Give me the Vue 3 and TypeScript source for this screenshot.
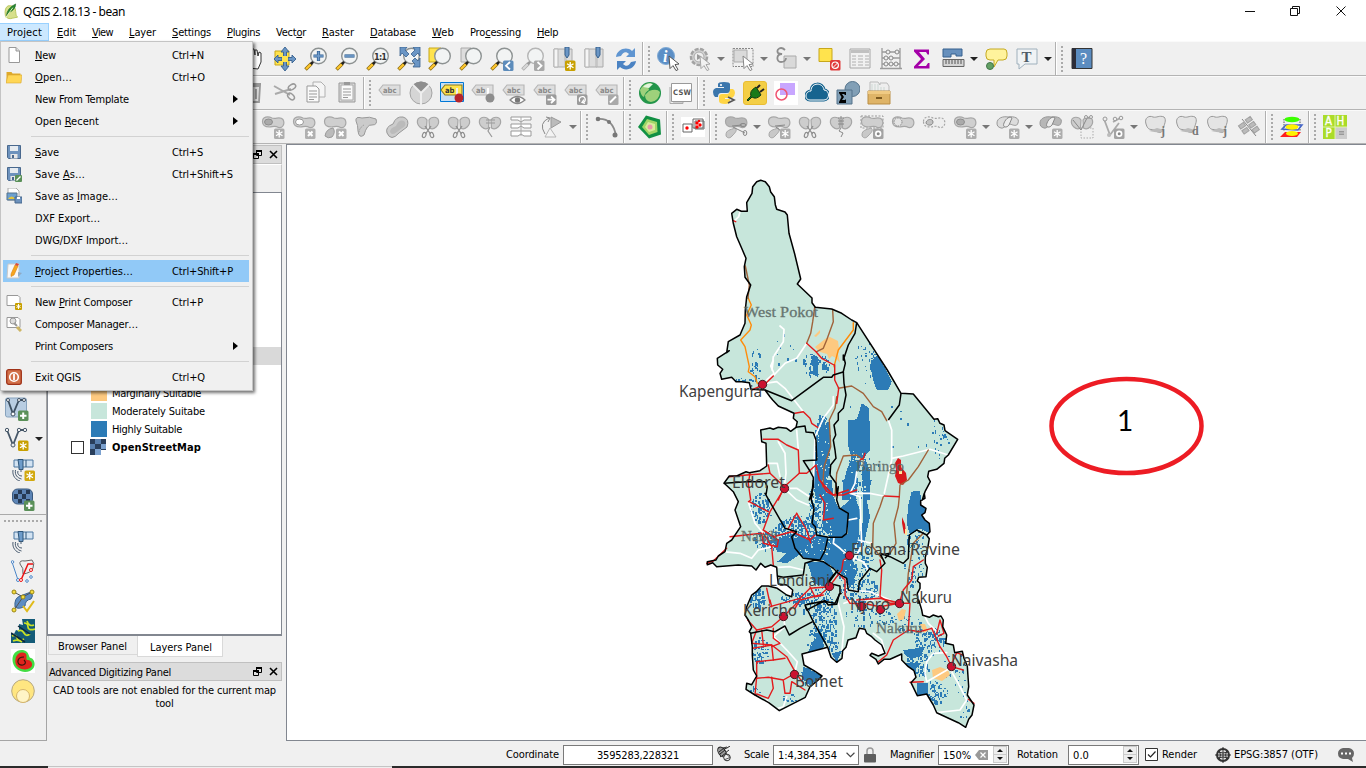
<script setup lang="ts">
import type { Directive } from 'vue'

/* Spreads or tightens letters so a label takes the given width in pixels. */
const vFit: Directive<HTMLElement, number | undefined> = {
  mounted(el, { value }) {
    if (!value) return
    const natural = el.getBoundingClientRect().width
    const count = (el.textContent ?? '').trim().length
    el.style.letterSpacing = `${(value - natural) / count}px`
  },
}

interface Label { text: string; key?: number; w: number }
const menus: Label[] = [
  { text: 'Project', key: 3, w: 35 }, { text: 'Edit', key: 0, w: 19 }, { text: 'View', key: 0, w: 21 },
  { text: 'Layer', key: 0, w: 27 }, { text: 'Settings', key: 0, w: 39 }, { text: 'Plugins', key: 0, w: 33 },
  { text: 'Vector', key: 4, w: 30 }, { text: 'Raster', key: 0, w: 32 }, { text: 'Database', key: 0, w: 46 },
  { text: 'Web', key: 0, w: 22 }, { text: 'Processing', key: 3, w: 51 }, { text: 'Help', key: 0, w: 21 },
]
interface Item { text?: string; key?: number; w?: number; short?: string; sw?: number; icon?: string; sub?: boolean; active?: boolean }
const items: Item[] = [
  { text: 'New', key: 0, w: 21, short: 'Ctrl+N', sw: 32, icon: 'page' },
  { text: 'Open…', key: 0, w: 37, short: 'Ctrl+O', sw: 33, icon: 'folder' },
  { text: 'New From Template', w: 94, sub: true },
  { text: 'Open Recent', key: 5, w: 64, sub: true },
  {},
  { text: 'Save', key: 0, w: 24, short: 'Ctrl+S', sw: 31, icon: 'save' },
  { text: 'Save As…', key: 5, w: 50, short: 'Ctrl+Shift+S', sw: 61, icon: 'saveas' },
  { text: 'Save as Image…', key: 8, w: 83, icon: 'saveimg' },
  { text: 'DXF Export…', w: 65 },
  { text: 'DWG/DXF Import…', w: 93 },
  {},
  { text: 'Project Properties…', key: 0, w: 98, short: 'Ctrl+Shift+P', sw: 61, icon: 'props', active: true },
  {},
  { text: 'New Print Composer', key: 4, w: 97, short: 'Ctrl+P', sw: 31, icon: 'composer' },
  { text: 'Composer Manager…', w: 103, icon: 'manager' },
  { text: 'Print Composers', w: 78, sub: true },
  {},
  { text: 'Exit QGIS', w: 46, short: 'Ctrl+Q', sw: 33, icon: 'exit' },
]

/* "|" starts a new tool group, "v" is a drop-down arrow, "V" its enabled form. */
const rows: string[][] = [
  'hand pansel zoomin zoomout zoom1 full zoomsel zoomlayer zoomlast zoomnext bookadd book refresh | identify action v select v expr v deselect table abacus sigma ruler V tip text V | help'.split(' '),
  'trash cut copy paste | tag pie tagpin tagdim tageye tagmove tagrot tagedit | globe csw | python plug shapes cloud sumshape drawer'.split(' '),
  'ring fillring part reshape offset split splitpart merge join rotate v | curve | penta | cluster | cutblob v cutnew split stitch dashbox holes dashhole ringnew v overlap v overlap2 nodes vnodes v topo topod topoj grid | stack | ahp'.split(' '),
]
const side = ['vecadd', 'vecnew', 'sat', 'rasteradd', '|', 'gps', 'vtools', 'topocheck', 'dem', 'heat', 'circle']

const G = '#a6a6a6'
const badge = (fill: string, glyph: string, x = 13, y = 13.5) =>
  `<g transform="translate(${x} ${y})"><rect width="10.5" height="10.5" rx="1.5" fill="${fill}"/>${glyph}</g>`
const star = '<path d="M5.200 1.500v7.500M2 3.300l6.500 3.900M8.500 3.300L2 7.200" stroke="#fff" stroke-width="1.300"/>'
const gStar = badge('#adadad', star)
const yStar = badge('#c8a000', star)
const plus = badge('#5a9058', '<path d="M5.200 2v6.500M2 5.200h6.500" stroke="#fff" stroke-width="2"/>')
const cross = badge('#b0b0b0', '<path d="M3 3l4.500 4.500M7.500 3L3 7.500" stroke="#fff" stroke-width="2"/>')
const lens = (inner: string, dim = false) =>
  `<circle cx="14.5" cy="9" r="7.8" fill="#f2f4f4" stroke="${dim ? '#b5b5b5' : '#8d9292'}" stroke-width="1.4"/><path d="M1.500 22.500l6-6" stroke="${dim ? '#aaa' : '#8a6a10'}" stroke-width="3.6"/><path d="M2 22l4.800-4.800" stroke="${dim ? '#d8d8d8' : '#ffc72e'}" stroke-width="2.200"/><path d="M6.800 17.200l2.300-2.300" stroke="${dim ? '#999' : '#222'}" stroke-width="2.600"/>${inner}`
const blob = `<path d="M1.500 6.500C1.500 1.500 7 1 11 3c4 1.500 8-2 11 1.500 2.500 5-1 9-4.500 8-4-2.500-6-.5-9-.5C4 12 1.500 10.500 1.500 6.500z" fill="#cfcfcf" stroke="${G}" stroke-width="1.2"/>`
const scissors = `<path d="M9 11l5.500 8M15 11l-5.500 8" stroke="#8e8e8e" stroke-width="1.3" fill="none"/><ellipse cx="8.200" cy="20" rx="1.700" ry="2.700" transform="rotate(20 8.200 20)" fill="none" stroke="#8e8e8e" stroke-width="1.200"/><ellipse cx="15.800" cy="20" rx="1.700" ry="2.700" transform="rotate(-20 15.800 20)" fill="none" stroke="#8e8e8e" stroke-width="1.200"/>`
const halves = `<path d="M10.500 13C6 16 .5 10 1.500 5.500 2.500 1 9 1.500 11 5zM13.500 13c4.500 3 10-3 9-7.500C21.500 1 15 1.500 13 5z" fill="#cdcdcd" stroke="${G}" stroke-width="1.2"/>`
const snip = `<path d="M2 20C2 15 6 15 11 13c3 2 0 5-3 8-2 3-6 2-6-1z" fill="#c8c8c8" stroke="${G}"/>`
const tag = (c: string, t: string, s: string) =>
  `<path d="M1 9l4-5h17v10H5z" fill="${c}" stroke="${s}" stroke-width="1.1"/><text x="5" y="12" font-family="DejaVu Sans" font-weight="bold" font-size="7.6" fill="${s === '#b5b5b5' ? '#8a8a8a' : '#333'}">${t}</text>`
const gTag = tag('#dedede', 'abc', '#b5b5b5')
const cursor = (c = '#fff', s = '#555') => `<path d="M12 9l10 8-4 .6 3 5-2 1-3-5-3 3z" fill="${c}" stroke="${s}" stroke-width="1"/>`
const disk = '<path d="M1.500 1.500h13v13h-12l-1-1z" fill="#6d92bd" stroke="#49688d"/><path d="M4 2h8v5H4z" fill="#e6ebf0"/><path d="M4.500 10h7v4.500h-7z" fill="#e6e6e6"/><path d="M6 11h2v3H6z" fill="#49688d"/>'
const satellite = '<path d="M3 3h19v7H3z" fill="#d3e3f2" stroke="#4b77a0"/><path d="M7 2.500h5v10H8v-3zM15 3v7" fill="#6e9cca" stroke="#2d5579"/><path d="M10 12v3M7 14c-1 3 1 5 4 5M4.500 13c-1 5 2 8 6 9M2 13c-1 6 3 10 7 11" stroke="#4a5c70" fill="none"/>'
const blobHole = blob + '<ellipse cx="7.500" cy="7" rx="4" ry="3" fill="#aaa" stroke="#8e8e8e"/>'
const overlapShape = '<path d="M1 8c0-5 6-7 11-6 6-1 12 1 10 6-1 4-5 2-8 1-4 0-6 5-9 4S1 11 1 8z" fill="#dcdcdc" stroke="#999"/><path d="M8 8c2-5 6-7 8-5l-3 7c-2 3-7 3-5-2z" fill="#ededed" stroke="#888"/>'
const topo = '<path d="M2 9c-2-6 3-9 7-7 4 1 6-2 11 0 3 3 0 8-1 12-1 5-5 4-8 1-4-1-7 1-9-6z" fill="#e4e4e4" stroke="#999"/><path d="M5 16l8-3 7 2c-3 4-8 2-15 1z" fill="#bbb"/>'
const letter = (t: string) => `<text x="17" y="20" font-family="Liberation Serif" font-weight="bold" font-size="12" fill="#777">${t}</text>`

const icons: Record<string, string> = {
  hand: '<path d="M7 21L2 12l2-1 3 3V4l2-1 1 6V2h2l1 6V3l2 0 1 6 1-4 2 1v9l-3 7z" fill="#fff" stroke="#333"/>',
  pansel: '<path d="M2 4h14v14H2z" fill="#ffe34d" stroke="#c7a71b"/><path d="M12 0l4 5h-2.500v14H16l-4 5-4-5h2.500V5H8zM1 12l4-4v2.500h4v3H5V16zM23 12l-4-4v2.500h-4v3h4V16z" fill="#6b96c5" stroke="#37618e" stroke-width=".9"/><path d="M9 9h6v6H9z" fill="#ffe34d"/>',
  zoomin: lens('<path d="M14.500 4v10M9.500 9h10" stroke="#2e5e91" stroke-width="3.200"/><path d="M14.500 4.500v9M10 9h9" stroke="#729dcb" stroke-width="1.700"/>'),
  zoomout: lens('<path d="M9.500 9h10" stroke="#2e5e91" stroke-width="3.200"/><path d="M10 9h9" stroke="#729dcb" stroke-width="1.700"/>'),
  zoom1: lens('<text x="8" y="12.500" font-family="DejaVu Sans Condensed" font-weight="bold" font-size="9" fill="#333" textLength="13">1:1</text>'),
  full: lens('') + '<path d="M3 0h7L8 3l4 4-3 3-4-4-2 3zM23 0h-7l2 3-4 4 3 3 4-4 2 3zM23 20h-7l2-3-3-3 3-3 3 3 2-3z" fill="#6b96c5" stroke="#37618e" stroke-width=".8"/>',
  zoomsel: '<path d="M1 1h12v14H1z" fill="#ffe34d" stroke="#c7a71b"/>' + lens(''),
  zoomlayer: '<path d="M2 1h10v14H2z" fill="#ddd" stroke="#aaa"/>' + lens(''),
  zoomlast: lens('') + badge('#5d8cbb', '<path d="M7 1.500L3 5.200 7 9" stroke="#fff" stroke-width="1.800" fill="none"/>'),
  zoomnext: lens('', true) + badge('#a9a9a9', '<path d="M3.500 1.500l4 3.700-4 3.800" stroke="#fff" stroke-width="1.800" fill="none"/>'),
  book: '<path d="M2 2h18v18H2z" fill="#ddd" stroke="#aaa"/><path d="M2 2h4v18H2zM13 2h1v18h-1z" fill="#f5f5f5" stroke="#b5b5b5"/><path d="M13 0h4v8l-2 3-2-3z" fill="#6b96c5" stroke="#37618e"/>',
  refresh: '<path d="M2 10C3 2 13-1 18 4l3-3v9h-9l3-3c-3-3-6-2-8 2z" fill="#5f95d1"/><path d="M22 14c-1 8-11 11-16 6l-3 3v-9h9l-3 3c3 3 6 2 8-2z" fill="#4b83c3"/>',
  identify: '<circle cx="9" cy="9" r="8.500" fill="#5c8fc6" stroke="#7faad5"/><text x="6" y="14.500" font-family="Liberation Serif" font-style="italic" font-weight="bold" font-size="16" fill="#fff">i</text>' + cursor(),
  action: '<circle cx="11" cy="10" r="8" fill="#d2d2d2" stroke="#a3a3a3" stroke-width="2.500" stroke-dasharray="4 1.500"/><circle cx="11" cy="10" r="5" fill="#eee" stroke="#aaa"/><path d="M9 7l5 3-5 3z" fill="#999"/>' + cursor('#f2f2f2', '#a5a5a5'),
  select: '<path d="M2 1.500h20v18H2z" fill="none" stroke="#888" stroke-dasharray="2 1"/><path d="M3 3h13v12H3z" fill="#dadada" stroke="#aaa"/>' + cursor('#fff', '#888'),
  expr: '<path d="M10 9h12v12H10z" fill="#d9d9d9" stroke="#aaa"/><path d="M11 3C7-1 2 2 4 6l4 1c-6 0-6 8-1 8 3 0 5-2 5-4" fill="none" stroke="#8d8d8d" stroke-width="1.800"/>',
  deselect: '<path d="M2 1.500h13v13H2z" fill="#ffe34d" stroke="#c7a71b"/>' + badge('#e03a3a', '<circle cx="5.200" cy="5.200" r="3.200" fill="none" stroke="#fff" stroke-width="1.200"/><path d="M3 7.500l4.500-4.500" stroke="#fff"/>', 13, 13),
  table: '<path d="M2 2h20v19H2z" fill="#f1f1f1" stroke="#a6a6a6"/><path d="M3 3h18v3H3z" fill="#c0c0c0"/><path d="M4 9h4m2 0h5m2 0h4M4 12h4m2 0h5m2 0h4M4 15h4m2 0h5m2 0h4M4 18h4m2 0h5m2 0h4" stroke="#b0b0b0"/>',
  abacus: '<path d="M3 1v20M21 1v20M1 21.500h22M3 5h18M3 11h18M3 17h18" stroke="#9b9b9b" stroke-width="1.300" fill="none"/><g fill="#eee" stroke="#888"><circle cx="9" cy="5" r="2"/><circle cx="18" cy="5" r="2"/><circle cx="7" cy="11" r="2"/><circle cx="12" cy="11" r="2"/><circle cx="7" cy="17" r="2"/><circle cx="12" cy="17" r="2"/><circle cx="17" cy="17" r="2"/></g>',
  sigma: '<path d="M4 2.500h15v5h-1.500L16 5H9l6 7-7 7h8l2-3h1.500v5.500H4v-2L11 12 4 4.500z" fill="#a400a8"/>',
  ruler: '<path d="M2 2h19v7h-6V7h-5v3H2z" fill="#6790bd" stroke="#37618e"/><path d="M2 12.500h21v7H2z" fill="#d5d5d5" stroke="#666"/><path d="M5 13v4m3-4v4m3-4v4m3-4v4m3-4v4m3-4v4" stroke="#555"/>',
  tip: '<path d="M6 2h14q3 0 3 4v3q0 4-4 4h-5l-4 7v-7H6q-4 0-4-4V6q0-4 4-4z" fill="#fff39c" stroke="#c5aa23"/><circle cx="6" cy="19" r="3.500" fill="#63a065" stroke="#41764a"/>',
  text: '<path d="M2 2h20v15H10l-6 5v-5H2z" fill="#f0f3f5" stroke="#9fb0bc"/><text x="6.500" y="15" font-family="Liberation Serif" font-weight="bold" font-size="15" fill="#4e5c66">T</text>',
  help: '<path d="M2 1.500h20v20H2z" fill="#5b8cc0" stroke="#333"/><path d="M2 1.500h4v20H2z" fill="#2c2c38"/><text x="10" y="17" font-family="Liberation Serif" font-size="16" fill="#fff">?</text>',
  trash: '<path d="M5 5h13l-1 16H6z" fill="#ddd" stroke="#999" stroke-width="1.800"/><path d="M4 3h15M9 8v10m5-10v10" stroke="#999" stroke-width="2"/>',
  cut: '<path d="M1 5l16 9M2 13l16-5" stroke="#aaa" stroke-width="2"/><ellipse cx="19" cy="6" rx="4" ry="2.500" transform="rotate(-30 19 6)" fill="none" stroke="#999" stroke-width="1.500"/><ellipse cx="18" cy="15.500" rx="4" ry="2.500" transform="rotate(45 18 15.500)" fill="none" stroke="#999" stroke-width="1.500"/>',
  copy: '<path d="M9 1h8l4 4v11H9z" fill="#f5f5f5" stroke="#b0b0b0"/><path d="M3 5h9l3 3v13H3z" fill="#fafafa" stroke="#999"/><path d="M5 10h8M5 13h8M5 16h8M5 18.500h5" stroke="#999"/>',
  paste: '<path d="M4 2h16v19H4z" fill="#d9d9d9" stroke="#999"/><path d="M6 4h12v15H6z" fill="#fafafa" stroke="#aaa"/><path d="M9 1h6v3H9z" fill="#999"/><path d="M8 8h8m-8 3h8m-8 3h8m-8 2.500h5" stroke="#999"/>',
  tag: gTag,
  pie: '<circle cx="12" cy="12" r="11" fill="#d5d5d5" stroke="#a5a5a5"/><path d="M12 12L3 4q9-7 18 0z" fill="#8e8e8e"/><path d="M12 24V12L3 3m9 9l9-9" stroke="#eee" stroke-width="2" fill="none"/>',
  tagpin: '<path d="M.5 1.500h23v19H.5z" fill="#c8dff5" stroke="#0078d7"/>' + tag('#ffe34d', 'ab', '#8a7a20') + '<path d="M17 7v8" stroke="#eee" stroke-width="2"/><circle cx="19" cy="17" r="4.500" fill="#b6242b"/>',
  tagdim: tag('#dedede', 'ab', '#b5b5b5') + '<path d="M17 7v8" stroke="#fff" stroke-width="2"/><circle cx="19" cy="17" r="4.500" fill="#8d8d8d"/>',
  tageye: gTag + '<path d="M8 19q7-7 15 0-8 7-15 0z" fill="#fff" stroke="#888" stroke-width="1.200"/><circle cx="15.500" cy="19" r="2.700" fill="#777"/>',
  tagmove: gTag + badge('#9b9b9b', '<path d="M1.500 5.200h6M5 2l3.500 3.200L5 8.500" fill="none" stroke="#fff" stroke-width="1.800"/>'),
  tagrot: gTag + badge('#9b9b9b', '<path d="M3 7a3 3 0 1 1 3 1M7 5L5 8l3 1" fill="none" stroke="#fff" stroke-width="1.300"/>'),
  tagedit: gTag + badge('#a9a9a9', '<path d="M2 8l6-6" stroke="#fff" stroke-width="2"/>'),
  globe: '<circle cx="12" cy="12" r="11" fill="#23954a"/><path d="M2 9q4-8 12-7-5 3-3 7-4 2-5 7-3-1-4-7zM11 10q8-3 11 1-1 9-9 10-6-1-6-7z" fill="#9ed17b"/><path d="M5 6q4-5 10-3l-4 4z" fill="#e3f5dc"/>',
  csw: '<path d="M4 21h10v1.500H1V6" stroke="#aaa" fill="none"/><path d="M2.500 2.500h20v18h-20z" fill="#fff" stroke="#999"/><text x="4" y="14" font-family="DejaVu Sans" font-weight="bold" font-size="7.500" textLength="18" fill="#555">CSW</text>',
  python: '<path d="M6 6V3q0-2 6-2t6 2v6q0 3-3 3H9q-3 0-3 4H3Q1 14 1 11t3-4h8V6z" fill="#3b76ac"/><path d="M18 8h3q2 1 2 4t-3 5h-7v1h5v2q0 3-5 3-6 0-6-3v-4q0-3 3-3h5q3 0 3-5z" fill="#ffd545"/><circle cx="9" cy="4" r="1.100" fill="#fff"/><path d="M16 16l6 3-6 3" stroke="#555" fill="none" stroke-width="1.700"/>',
  plug: '<rect x=".5" y=".5" width="23" height="23" rx="2.500" fill="#f3ce45" stroke="#e9bd34"/><path d="M4 19l4-4q-2-5 5-9l5 8q-5 5-9 2l-4 4z" fill="#187a18" stroke="#123812"/><path d="M14 7l3-3m0 7l4-3" stroke="#222" stroke-width="2"/>',
  shapes: '<path d="M0 0h24v24H0z" fill="#fff"/><path d="M6 2h15v12H6z" fill="#c8a6ff"/><circle cx="7.500" cy="13.500" r="5.500" fill="none" stroke="#f05572" stroke-width="1.500"/>',
  cloud: '<path d="M5 19c-6 0-5-9 1-9 0-9 12-9 13-1 6 0 6 10 0 10z" fill="#17648f" stroke="#17648f" stroke-width="3"/><path d="M5 19c-6 0-5-9 1-9 0-9 12-9 13-1 6 0 6 10 0 10z" fill="#17648f" stroke="#fff" stroke-width="1"/>',
  sumshape: '<circle cx="16.500" cy="8" r="7.500" fill="#819fb6" stroke="#54738b"/><path d="M1 9h15v14H1z" fill="#819fb6" stroke="#54738b"/><path d="M3 11h7v3H9l-1-1H6l2 3-2 3h3l1-1v4H3v-1l2.500-5L3 12z" fill="#000"/>',
  drawer: '<path d="M3 1h8l2 3V2h7l2 3v8H3z" fill="#eee" stroke="#bbb"/><path d="M5 3v8m3-8v8m3-8v8m3-5v5m3-5v5" stroke="#cdd8d4"/><path d="M1 10h22v13H1z" fill="#dfb467" stroke="#b98d45"/><path d="M1 10h22v3H1z" fill="#f0ca83"/><path d="M9 16h6v2H9z" fill="#7d5a20"/>',
  ring: blobHole + gStar,
  fillring: blob + '<ellipse cx="7.500" cy="7" rx="4" ry="3" fill="#fff" stroke="#999"/>' + cross,
  part: blob + '<path d="M2 21q1-7 8-8 3 4-1 9-4 2-7-1z" fill="#bbb" stroke="#999"/>' + cross,
  reshape: '<path d="M2 6Q1 1 8 3q8-2 14 1 2 6-4 6-5-1-8 10-5 4-6-4 0-6-2-10z" fill="#cbcbcb" stroke="#999"/><path d="M10 10q-5 3-5 8" stroke="#999" fill="none" stroke-dasharray="1.500 1"/>',
  offset: '<path d="M2 18q-2-6 6-9 3-8 10-7 7 2 4 10-4 3-8 6-8 9-12 0z" fill="#ccc" stroke="#999"/><path d="M5 17q0-4 6-6 3-7 8-5 3 3 0 6-4 2-7 5-5 4-7 0z" fill="#bbb"/>',
  split: halves + scissors, splitpart: halves + scissors,
  merge: halves + '<path d="M8 5h9M8 8h9m-5 4l-2 4 4 6" stroke="#999" fill="none" stroke-width="1.200"/>',
  join: '<path d="M2 2h20v3h-7l-3 2-3-2H2zM2 9h20v4h-7l-3-2-3 2H2zM2 16h20v5h-7l-3-2-3 2H2z" fill="#fff" stroke="#999"/><path d="M12 2v19" stroke="#aaa"/>',
  rotate: '<path d="M11 2l10 5-10 6z" fill="#bbb" stroke="#999"/><path d="M10 13l6 9H5z" fill="#f3f3f3" stroke="#b5b5b5"/><path d="M5 19Q-2 8 9 3M6 2l4 1-2 4" fill="none" stroke="#888"/>',
  curve: '<path d="M3 4q15-1 18 17" fill="none" stroke="#8a8a8a" stroke-width="1.800"/><circle cx="3" cy="4" r="2.300" fill="#777"/><circle cx="14" cy="7" r="2" fill="#777"/><circle cx="20" cy="20" r="2.500" fill="#777"/>',
  penta: '<path d="M8 .5l14 4 1 15L11 23.500 0 12z" fill="#119044"/><path d="M9 4l10 3 .500 10L11 20 4 12z" fill="#a2d568"/><path d="M10 7l7 2v6l-6 2-4-5z" fill="#d8ec9c"/><circle cx="12" cy="12" r="2.500" fill="#e69aa8"/>',
  cluster: '<path d="M0 2h24v20H0z" fill="#fff"/><path d="M2 9h9v8H2zM12 4h10v9H12zM14 6h9v8h-9z" stroke="#666" fill="none"/><circle cx="6" cy="13" r="1.700" fill="red"/><circle cx="16" cy="8" r="1.700" fill="red"/><circle cx="19" cy="10" r="1.700" fill="red"/><circle cx="16" cy="12" r="1.700" fill="red"/><circle cx="18" cy="6" r="1.200" fill="red"/>',
  cutblob: blob.replace('#cfcfcf', '#b7b7b7') + snip + '<path d="M8 11l10-1M9 12l12 6" stroke="#888"/><ellipse cx="19" cy="10" rx="3" ry="1.500" fill="none" stroke="#888"/><ellipse cx="21" cy="18" rx="1.800" ry="2.500" fill="none" stroke="#888"/>',
  cutnew: blob + snip + '<path d="M8 11l10-1M9 12l5 4" stroke="#888"/>' + gStar,
  stitch: halves + '<path d="M9 3h6M9 6h6M9 9h6M12 1v12l-2 3 4 2-2 4" stroke="#888" fill="none"/>',
  dashbox: '<path d="M1 1h22v12H1z" fill="none" stroke="#999" stroke-dasharray="2 1.500"/>' + blob + snip + badge('#a3a3a3', '<circle cx="5.200" cy="5.200" r="3.200" fill="#fff"/><circle cx="5.200" cy="5.200" r="1.500" fill="#888"/>'),
  holes: blob + '<circle cx="7" cy="7" r="4" fill="#e4e4e4" stroke="#888" stroke-dasharray="1.500 1"/>',
  dashhole: blob.replace('fill="#cfcfcf"', 'fill="#eee" stroke-dasharray="2 1.500"') + '<path d="M4 8c0-4 7-5 7-1s-6 4-7 1z" fill="#c2c2c2" stroke="#888"/>',
  ringnew: blobHole + gStar, overlap: overlapShape + gStar,
  overlap2: overlapShape.replace('#dcdcdc', '#b7b7b7') + gStar,
  nodes: '<path d="M11 13h12v10H11z" fill="none" stroke="#aaa" stroke-dasharray="1.500 1.500"/>' + halves + '<path d="M3 5l8 10L17 3h4" stroke="#888" fill="none"/><circle cx="16" cy="2" r="1.500" fill="#eee" stroke="#999"/><circle cx="21" cy="2" r="1.500" fill="#eee" stroke="#999"/>',
  vnodes: '<path d="M3 4l6 16L18 8M12 7l9-5" stroke="#aaa" fill="none" stroke-width="1.800"/><circle cx="4" cy="4" r="2" fill="#eee" stroke="#999"/><circle cx="14" cy="4" r="1.800" fill="#eee" stroke="#999"/><circle cx="20" cy="3" r="1.800" fill="#eee" stroke="#999"/><circle cx="8" cy="20" r="2" fill="#bbb"/>' + badge('#a3a3a3', '<circle cx="5.200" cy="5.200" r="3.200" fill="#fff"/><circle cx="5.200" cy="5.200" r="1.500" fill="#888"/>'),
  topo: topo + letter('j'), topod: topo + letter('d'), topoj: topo + letter('j'),
  grid: '<g transform="rotate(-35 12 12)" fill="#bbb" stroke="#a1a1a1"><path d="M4 5h6v4H4zM4 11h6v4H4zM13 4h6v4h-6zM13 10h6v4h-6zM13 16h6v4h-6z"/></g><path d="M5 4l14 17" stroke="#888"/>',
  stack: '<path d="M4 4v12m16-12v12" stroke="#555" stroke-dasharray="1.500 1"/><ellipse cx="12" cy="4.500" rx="7.500" ry="2.700" fill="#3bff00"/><path d="M2 14l4-4h16l-4 5z" fill="none" stroke="#4565c7" stroke-width="1.500"/><ellipse cx="12" cy="12" rx="6.500" ry="2.800" fill="#fff200"/><path d="M0 22l5-5h16l-4 5z" fill="#ff2020"/><ellipse cx="12" cy="18.500" rx="6" ry="2.600" fill="#fff200"/>',
  ahp: '<path d="M0 0h24v24H0z" fill="#aadc28"/><path d="M12 12h12v12H12z" fill="#ccc"/><path d="M12 0v24M0 12h24" stroke="#e1f3a8"/><g font-family="DejaVu Sans Condensed" font-size="11.500" fill="#fff" stroke="#fff" stroke-width=".3"><text x="2" y="10">A</text><text x="13.500" y="10">H</text><text x="2.500" y="22">P</text></g><path d="M16 16h5v1.500h-5zM16 18.500h5V20h-5z" fill="#999"/>',
  vecadd: '<rect x=".5" y="1" width="21" height="19" rx="2" fill="#b8cde2" stroke="#87a2bd"/><path d="M3 3l5 14L14 3h5" stroke="#3c4e60" fill="none" stroke-width="1.800"/><g fill="#fff" stroke="#3c4e60"><circle cx="3" cy="3" r="1.500"/><circle cx="14" cy="3" r="1.500"/><circle cx="19" cy="3" r="1.500"/><circle cx="8" cy="17" r="2"/></g>' + plus,
  vecnew: '<path d="M2 3l6 15 6-15h6" stroke="#465768" fill="none" stroke-width="1.800"/><g fill="#eee" stroke="#465768"><circle cx="2" cy="3" r="1.700"/><circle cx="14" cy="3" r="1.700"/><circle cx="20" cy="3" r="1.700"/><circle cx="8" cy="18" r="2"/></g>' + yStar,
  sat: satellite + badge('#d2a90e', star, 13.5, 13.5), gps: satellite,
  rasteradd: '<rect x="1.500" y="2" width="20" height="15" rx="5" fill="#5d85b6" stroke="#39587d"/><path d="M7 3h4v4H7zM15 3h4v4h-4zM11 7h4v5h-4zM3 7h4v5H3zM7 12h4v4H7zM15 12h4v4h-4z" fill="#263a55"/>' + plus,
  vtools: '<path d="M9 5q-1-4 5-3l7-1q3 3 1 8t-10 6q1-6-3-10z" fill="#eee" stroke="#666"/><path d="M1 3l6 18" stroke="#4b86c8"/><path d="M10 21L17 5h5" stroke="#e11" fill="none" stroke-width="1.500"/><g fill="#fff" stroke="#4b86c8"><circle cx="1.500" cy="3" r="1.300"/><circle cx="7" cy="21" r="1.500"/><circle cx="16" cy="22" r="1.300"/><circle cx="20" cy="18" r="1.300"/></g><g fill="#fff" stroke="#e11"><circle cx="10" cy="21" r="1.500"/><circle cx="20" cy="11" r="1.500"/></g>',
  topocheck: '<path d="M4 18q-1-9 5-11l11-4q3 4 0 7-6 1-6 7-6 4-10 1z" fill="#5d8dc4" stroke="#3a628e"/><path d="M3 3l9 5 9-5M12 8L3 21" stroke="#555" fill="none"/><g fill="#f5dc3f" stroke="#9a8613"><circle cx="3" cy="3" r="2"/><circle cx="21" cy="3" r="2"/><circle cx="12" cy="8" r="2"/><circle cx="3" cy="21" r="2"/></g><path d="M12 17l4 5 7-10" stroke="#e0ba18" stroke-width="2" fill="none"/>',
  dem: '<path d="M0 14l3 1 2-4 3 1V5l4 1-1-6h13v24H0z" fill="#145b78"/><path d="M1 17q4-2 5 2t7 1m-6-8q4-2 6 2t6 1M13 4q4 0 4 4t7 2M2 22q5-2 9 1M16 2q2 6 7 4" stroke="#cce325" stroke-width="1.700" fill="none"/><path d="M0 14l14 9M7 7l12 8" stroke="#10283c" stroke-width="1.500"/>',
  heat: '<path d="M0 0h24v24H0z" fill="#fff"/><path d="M12 1C4 0 0 7 2 14s10 11 17 8 5-12 1-13c-3 0-1-7-8-8z" fill="#42dd43"/><path d="M12 3.500C7 2.500 3.500 8 4.500 14s10 8 14.500 5 1-9-3-8c-2-2 2-6.500-4-7.500z" fill="#e0241d"/><path d="M13 8c-8 0-8 9-1 8 3-1 3-3 1-5" stroke="#3a150c" stroke-width="1.200" fill="none"/>',
  circle: '<circle cx="12" cy="12" r="11.300" fill="#ffe681" stroke="#b5a883"/><circle cx="12" cy="17" r="6.500" fill="#fff4c6" stroke="#d6b56a"/>',
  page: '<path d="M3 .5h7l3.500 3.500v11.500H3z" fill="#fff" stroke="#989898"/><path d="M10 .5V4h3.500" fill="#ddd" stroke="#989898"/>',
  folder: '<path d="M.5 3h5l1 1.500h8V14H.5z" fill="#dfa92a"/><path d="M0 14l2-8h14l-1 8z" fill="#ffd655" stroke="#d8a832" stroke-width=".6"/>',
  save: disk,
  saveas: disk + '<rect x="9" y="9" width="7" height="7" rx="1" fill="#5a9058"/><path d="M10.500 14.500l4-4" stroke="#fff" stroke-width="1.300"/>',
  saveimg: '<path d="M2 0h8l3 3v9H2z" fill="#fff" stroke="#aaa"/><path d="M1 5h10v7H1z" fill="#6ca0cf" stroke="#55738d"/><path d="M2 11q3-5 8 0z" fill="#e3c53e"/><path d="M9 9h7v6H9z" fill="#6d92bd" stroke="#49688d"/><path d="M11 9h3v2h-3z" fill="#fff"/>',
  props: '<path d="M2 1h11v14H1z" fill="#f8f8f8" stroke="#c9c9c9"/><path d="M12 9l4 1-4 4z" fill="#8fa9c4"/><path d="M5 11l4-9 3 1-4 9-3 1.500z" fill="#f7a51d" stroke="#d98212" stroke-width=".6"/><path d="M9 2l1-2 3 1-1 2z" fill="#d94c3b"/>',
  composer: '<path d="M1 1.500h11l2 2v8H1z" fill="#fff" stroke="#999"/><rect x="9" y="9" width="7" height="7" rx="1" fill="#c8a000"/><path d="M12.500 10v5M10.500 11.500l4 2m0-2l-4 2" stroke="#fff"/>',
  manager: '<path d="M1 1.500h11l2 2v8H1z" fill="#fff" stroke="#999"/><circle cx="7" cy="5" r="3" fill="#ddd" stroke="#999"/><path d="M8 7l3 3" stroke="#999" stroke-width="2"/><path d="M11 11l4 4" stroke="#cdb565" stroke-width="3"/>',
  exit: '<rect x=".7" y=".7" width="14.600" height="14.600" rx="2" fill="#d2714a" stroke="#a03218" stroke-width="1.300"/><circle cx="8" cy="8" r="4.300" fill="none" stroke="#fff" stroke-width="1.600"/><path d="M8 5v6" stroke="#fff" stroke-width="1.800"/>',
}
icons.bookadd = icons.book + yStar

/* Map geometry. Each sheet has its own origin and a grid of three units per map pixel. */
const sheets: Record<string, [number, number]> = { A: [690, 170], B: [670, 340], C: [690, 480], D: [720, 590] }
function line(src: string): string {
  let origin = sheets.A
  const out: string[] = []
  const tokens = src.trim().split(/\s+/)
  for (let i = 0; i < tokens.length; ) {
    if (sheets[tokens[i]]) { origin = sheets[tokens[i]]; i++; continue }
    out.push(`${(origin[0] + +tokens[i] / 3).toFixed(1)} ${(origin[1] + +tokens[i + 1] / 3).toFixed(1)}`)
    i += 2
  }
  return 'M' + out.join('L')
}
const outline = line(`A 172 124 170 98 186 70 188 50 200 35 212 31 226 35 238 50 242 66 253 80 256 104 260 118 285 126 292 135 297 190 314 252 332 327 322 342 366 384 366 398 376 412 425 417 455 430 485 450 500 458 592 600
B 693 160 730 162 792 238 803 236 810 250 822 255 825 272 863 298 835 345 824 355 822 370 800 388 776 394 773 410 781 425 765 455 757 480
C 703 40 705 55 692 62 692 75 708 85 705 98 695 105 705 120 718 130 720 155 710 166 718 176 714 200 706 232 706 250 712 262 708 290 686 292 682 303 690 310 690 325 682 340 684 370
D 596 30 605 60 608 76 628 82 640 75 655 80 663 78 670 90 668 110 680 135 677 160 700 165 704 188 727 184 732 205 742 228 746 290 742 315 762 345 756 375 746 388 737 412 715 398 650 368 640 345 620 312 592 317 573 278 588 262 582 242 565 230 545 210 545 192 510 208 492 208 475 222 468 208 450 196 455 190 475 198 495 190 485 165 465 150 455 140 440 130 435 118 418 115 408 143 384 150 378 172 368 182 366 205 350 217 333 202 323 172 246 192 252 225 282 242 306 258 295 270 270 290 256 322 178 362 146 338 105 315 78 298 80 280 95 284 110 258 100 240 97 195 97 170 92 130 88 125 95 112 85 90 75 75 80 50 95 15
C 192 340 200 334 215 318 235 318 262 325 290 345 305 350 308 330 290 315 265 312 262 288 260 262 242 255 225 262 212 250 198 270 185 258 145 255 80 260 68 248 52 254 52 245 78 240 85 228 105 215 110 190 125 180 152 140 135 90 145 65 130 35 105 12
B 162 430 178 408 200 408 228 395 238 398 270 392 290 378 288 310 275 305 272 270 300 264 310 268 325 262 350 265 362 274 378 262 382 245 370 235 372 220 325 198 308 180 300 170 285 150 243 148 238 128 215 125 198 125 185 112 155 118 150 100 158 88 143 75 142 55 178 32
A 110 548 115 515 150 495 165 460 166 420 170 380 182 345 165 322 163 290 168 265 155 235 140 200 130 160 125 130 140 118 154 124`) + 'Z'
const borders = [
  'A 500 458 495 490 475 525 460 570 B 520 45 526 70 520 95 522 130 528 165 520 205 505 220 505 240 492 255 497 285 490 300 495 330 498 355 482 375 480 405 498 430 500 460 C 445 20 440 60 448 84 475 100 470 160 455 172 415 172 380 165 376 140 366 130 372 85 364 60 370 0',
  'B 522 95 490 105 485 112 460 112 365 182 285 150', 'B 693 160 688 195 655 240',
  'B 378 262 405 258 408 276 430 278 438 300 440 360 400 362 418 390 430 412 430 440 418 480 C 370 40', 'B 162 430 230 425 285 425 292 440 288 465 C 225 40 285 145 320 155 305 170 315 205 340 235 390 240 405 212 413 175',
  'C 262 288 280 292 340 285 345 250 375 240 400 245 430 265 445 280 470 295 475 330 505 335 508 305 540 265 560 275 585 250 570 220 600 230 640 250 655 235 658 165 680 150 710 165',
  'C 440 275 415 310 450 318 450 340 435 370 410 365 365 370 345 375 350 390 D 315 32 255 45 280 95 323 172', 'D 315 32 325 45 350 43 358 12 365 10', 'D 92 130 140 120 165 125 195 108 208 135 240 115 278 95', 'C 585 235 600 220 570 225', 'C 410 312 430 285 445 270',
].map(line)
const waterMask = [
  'B 600 75 614 50 625 48 645 85 665 125 655 150 620 150 608 115', 'B 575 190 598 205 600 330 580 355 545 355 535 320 535 240 560 240',
  'B 545 355 575 365 560 410 560 480 515 480 520 430 530 390', 'B 585 355 600 390 600 480 580 480 575 400', 'B 455 250 480 250 480 400 460 440 490 480 440 480 430 400 440 300',
  'C 455 0 505 0 498 60 510 90 505 180 480 230 505 270 480 325 465 290 440 270 400 240 345 235 320 215 310 165 380 165 430 172 475 160 475 100 450 85 480 60', 'C 370 0 425 0 430 50 445 85 475 100 470 165 420 172 400 150 400 60 380 50', 'C 350 245 410 245 430 280 405 320 370 310 360 270',
  'C 520 0 545 0 530 60 540 110 520 200 500 200 520 120', 'C 655 75 665 35 690 32 695 70 708 85 705 110 718 130 718 160 690 145 660 165 650 130', 'C 255 180 310 160 335 220 290 250 262 245 290 220 260 215',
  'D 335 190 366 182 350 217', 'D 250 230 306 258 270 285 245 265', 'D 550 180 570 178 615 170 600 200 570 205 555 195', 'D 540 220 605 220 585 240 565 235', 'D 590 280 625 280 625 320 650 330 655 342 625 325 592 317', 'D 262 188 285 150 302 115 312 172',
  'B 425 50 445 50 445 105 430 105', 'B 457 75 470 75 470 90 457 90',
].map(s => line(s) + 'Z')

let seed = 7
const rand = () => (seed = (seed * 16807) % 2147483647) / 2147483647
/* centre x, centre y, radius x, radius y, number of cells */
const patches: number[][] = [
  [815, 364, 14, 12, 65], [755, 363, 5, 18, 28], [785, 350, 14, 16, 10], [870, 358, 16, 18, 50], [740, 381, 16, 3, 30], [822, 440, 8, 26, 220], [940, 436, 10, 22, 40], [885, 420, 48, 50, 16],
  [858, 455, 10, 45, 70], [798, 535, 26, 20, 420], [767, 540, 14, 10, 85], [760, 508, 11, 15, 100], [817, 505, 9, 28, 180], [852, 560, 20, 26, 180], [824, 620, 12, 30, 190], [815, 600, 18, 16, 60],
  [860, 590, 20, 12, 130], [870, 617, 28, 10, 55], [914, 555, 10, 35, 60], [919, 520, 9, 20, 60], [757, 598, 8, 10, 90], [800, 597, 20, 5, 80], [759, 650, 9, 13, 60], [808, 675, 8, 10, 65],
  [823, 640, 16, 16, 80], [930, 640, 15, 13, 110], [918, 664, 12, 13, 90], [931, 692, 16, 11, 120], [956, 670, 14, 22, 28], [962, 704, 8, 14, 10], [910, 625, 12, 12, 30], [755, 690, 5, 6, 10], [790, 697, 8, 5, 14],
]
const specks = patches.map(([cx, cy, rx, ry, n]) => {
  let d = ''
  for (let i = 0; i < n; i++) {
    const a = rand() * Math.PI * 2
    const r = Math.sqrt(rand())
    const x = Math.round((cx + Math.cos(a) * rx * r) / 1.33) * 1.33
    const y = Math.round((cy + Math.sin(a) * ry * r) / 1.33) * 1.33
    d += `M${x.toFixed(1)} ${y.toFixed(1)}h1.400v${rand() > 0.6 ? 2.7 : 1.4}h-1.400z`
  }
  return d
}).join('')
const gaps = [[815, 540, 16, 14, 70], [800, 530, 12, 8, 40], [823, 440, 8, 30, 70], [852, 565, 12, 20, 40], [820, 500, 7, 25, 60], [857, 475, 8, 25, 25]].map(([cx, cy, rx, ry, n]) => {
  let d = ''
  for (let i = 0; i < n; i++) d += `M${(cx + (rand() * 2 - 1) * rx).toFixed(1)} ${(cy + (rand() * 2 - 1) * ry).toFixed(1)}h1.400v1.400h-1.400z`
  return d
}).join('')

const roads: { c: string; d: string[] }[] = [
  { c: '#fff', d: [
    'A 150 125 146 140 134 152', 'A 270 468 282 478 280 515 250 560 246 600 B 310 60 302 78 312 100 290 120', 'B 410 10 380 55 345 70 312 105', 'B 285 130 320 125 345 145 400 215', 'B 490 170 490 195 460 235 435 290 C 370 20 360 60',
    'B 655 240 665 270 665 360 C 583 40', 'B 665 355 700 348 780 328 835 345', 'B 380 270 385 330', 'B 325 305 345 340 348 400 343 440', 'B 290 370 322 370 330 410', 'B 343 445 380 445 430 478', 'C 283 25 320 60 355 75', 'B 560 395 555 430 540 460 600 460 640 468', 'C 480 40 510 50 515 200 490 240',
    'C 100 215 150 220 185 235 205 210 245 200', 'C 175 65 195 130 220 160', 'C 478 230 450 205 430 190 432 175', 'C 478 228 520 245 535 270', 'C 262 262 300 260 340 270', 'D 355 40 372 110 366 180', 'D 460 30 400 30 372 40', 'D 190 80 195 110 160 140', 'D 160 138 200 180 232 215 225 245', 'D 460 130 485 150 495 190', 'D 200 320 190 350 165 358 140 330', 'D 692 240 715 280 740 330 720 360 650 368', 'D 690 235 620 275 615 250 620 215', 'D 620 215 640 190 680 188', 'C 470 330 540 335 600 360',
    'D 600 50 625 100 650 125', 'C 505 180 545 190', 'C 475 120 500 115',
  ] },
  { c: '#ff8c0a', d: ['A 175 385 184 405 170 435 184 465 180 480 152 510 165 530 178 590 B 235 95 255 110 262 130', 'A 490 458 490 480 445 540 432 590'] },
  { c: '#a0623a', d: ['A 166 288 178 345 174 385', 'A 374 412 368 455 362 490 350 520', 'A 428 422 430 455 410 510 400 535 380 545', 'B 500 170 495 205 478 240 482 320 462 380 458 440', 'B 505 145 545 138 580 160 610 200 635 215 650 242', 'B 500 400 520 348 560 345 580 360', 'B 500 400 495 470', 'B 775 330 745 380 715 420 690 435 688 470 C 625 80 612 130 618 190 600 220', 'C 580 50 570 80 550 130 548 200 575 235', 'C 700 160 670 190 655 280 650 340'] },
  { c: '#e31a1c', d: ['A 350 520 378 545 395 565 432 585 B 494 75 494 120 506 145 500 190', 'B 245 150 285 132 310 108', 'B 375 220 400 215 420 235 425 250 443 262', 'B 280 298 325 298 350 315 385 330 388 400 343 440 325 480', 'B 388 400 410 400 438 375 448 420 490 465 520 465 560 450', 'B 585 340 580 355 570 360', 'B 295 375 300 400 343 440', 'B 178 410 230 405 300 400', 'B 240 400 235 430 242 480 C 175 65', 'C 283 25 240 95 220 150 250 170 305 155 360 180 375 165', 'C 320 100 295 145', 'C 320 100 350 150 362 188', 'C 178 65 235 95', 'C 120 170 215 160 220 190 262 200 265 180 220 150', 'C 390 0 410 35 430 45 475 30', 'C 583 48 628 50', 'C 390 45 405 70 400 120 430 115', 'C 220 160 245 200 250 255', 'C 50 250 70 243 110 205', 'C 478 230 460 240 455 270 418 320 360 325 330 355 240 380', 'C 418 320 390 345 330 360 315 385', 'C 360 320 375 350 400 345', 'C 445 280 465 300 465 345 480 370 530 372 570 380 628 370', 'C 628 370 640 330 665 300 670 260 700 240', 'C 570 240 575 270 570 350 600 370 628 370', 'C 230 325 240 370 D 150 30 155 50', 'D 83 90 110 120 155 110 190 80 230 40', 'D 110 120 95 160 155 165 200 200 225 245', 'D 98 175 155 165 160 210 110 215', 'D 110 215 110 260 105 315', 'D 110 265 145 262 190 270 225 250', 'D 155 262 160 295 145 325 110 312', 'D 190 272 195 310 210 310 215 275 255 300', 'D 125 120 130 165', 'D 160 115 160 145 180 160 155 170', 'D 160 210 195 205', 'D 228 250 250 280', 'D 540 40 480 25 410 30', 'D 540 40 570 40 565 120 600 125 635 115', 'D 565 120 520 150 500 195 475 215', 'D 635 115 660 170 680 200 695 230 730 240', 'D 650 130 660 90 672 130 655 138', 'D 570 277 610 275', 'D 692 228 710 188 728 195', 'D 745 328 762 340', 'A 130 152 137 155'] },
]
const cities = [[762.5, 384.5], [784.5, 488.5], [849.5, 555.5], [829.5, 586.5], [783.5, 616.5], [861.5, 606.5], [880.5, 609.5], [899.5, 603.5], [794.5, 674.5], [951.5, 666.5]]
const places = [
  { t: 'Kapenguria', x: 679, y: 397, w: 83 }, { t: 'Eldoret', x: 732, y: 488, w: 53 }, { t: 'Eldama Ravine', x: 851, y: 555, w: 109 }, { t: 'Londiani', x: 769, y: 586, w: 61 },
  { t: 'Kericho', x: 743, y: 616, w: 54 }, { t: 'Njoro', x: 850, y: 610, w: 40 }, { t: 'Nakuru', x: 900, y: 603, w: 52 }, { t: 'Naivasha', x: 951, y: 666, w: 67 }, { t: 'Bomet', x: 795, y: 687, w: 48 },
]
const counties = [{ t: 'West Pokot', x: 744, y: 317, w: 74 }, { t: 'Baringo', x: 856, y: 471, w: 48 }, { t: 'Nandi', x: 741, y: 541, w: 37 }, { t: 'Nakuru', x: 876, y: 633, w: 46 }]
</script>

<template>
  <div class="window">
    <header class="title">
      <svg class="logo" viewBox="0 0 16 18"><path d="M6 3q8-1 8 6 0 5 2 6l-5 1q-6 2-8-3-1-8 3-10z" fill="#d7e08c" stroke="#b8c65b" /><path d="M4 14Q5 5 14 1q0 6-7 9z" fill="#27892f" stroke="#1c6323" stroke-width=".6" /><path d="M3 16l8-11" stroke="#eef4c0" /></svg>
      <span v-fit="102">QGIS 2.18.13 - bean</span>
      <svg class="controls" viewBox="0 0 110 20" fill="none" stroke="#111"><path d="M5 10.500h10M50.500 7.500h7v7h-7zM52.500 7V5.500h7v7h-1.500M96.500 5.500l9 9M105.500 5.500l-9 9" /></svg>
    </header>
    <nav class="menubar">
      <span v-for="m in menus" :key="m.text" class="menu" :class="{ open: m.text === 'Project' }"><span v-fit="m.w">{{ m.text.slice(0, m.key) }}<u>{{ m.text[m.key ?? 0] }}</u>{{ m.text.slice((m.key ?? 0) + 1) }}</span></span>
    </nav>

    <div v-for="(row, r) in rows" :key="r" class="toolbar" :class="'bar' + r">
      <template v-for="(name, i) in row" :key="i">
        <span v-if="name === '|'" class="split"><i class="dots"></i></span>
        <span v-else-if="name === 'v' || name === 'V'" class="drop" :class="{ on: name === 'V' }"></span>
        <span v-else class="tool"><svg viewBox="0 0 24 24" v-html="icons[name]"></svg></span>
      </template>
    </div>

    <main class="work">
      <aside class="side">
        <template v-for="(name, i) in side" :key="i">
          <span v-if="name === '|'" class="hsplit"><i class="hdots"></i></span>
          <span v-else class="sidetool" :class="{ lead: i < 2 }"><svg viewBox="0 0 24 24" v-html="icons[name]"></svg><i v-if="i === 1" class="drop on"></i></span>
        </template>
      </aside>
      <section class="docks">
        <div class="docktitle"><span></span><svg class="dockbtns" viewBox="-1 0 30 12"><path d="M4.500 1.500h5v5h-5zM1.500 4.500h5v5h-5z" fill="#e1e1e1" stroke="#000" /><path d="M4 2h6M1 5h6" stroke="#000" stroke-width="2" /><path d="M18 2l7 7M25 2l-7 7" stroke="#000" stroke-width="1.600" /></svg></div>
        <div class="docktools"></div>
        <div class="tree">
          <div class="picked"></div>
          <div class="leaf"><i class="sw orange"></i><span v-fit="89">Marginally Suitable</span></div>
          <div class="leaf"><i class="sw mint"></i><span v-fit="93">Moderately Suitabe</span></div>
          <div class="leaf"><i class="sw blue"></i><span v-fit="70">Highly Suitable</span></div>
          <div class="leaf osm"><i class="check"></i><svg viewBox="0 0 16 16"><path d="M0 0h16v11h-5v5H0z" fill="#7ba1cf" /><path d="M0 0h5v5H0zM11 0h5v5h-5zM5 5h6v5H5zM0 10h5v6H0zM11 10h5v1h-5z" fill="#293e5b" /><path d="M5 0h6v5H5zM0 5h5v5H0z" fill="#587fae" /></svg><b v-fit="89">OpenStreetMap</b></div>
        </div>
        <div class="tabs"><span class="tab"><span v-fit="69">Browser Panel</span></span><span class="tab current"><span v-fit="62">Layers Panel</span></span></div>
        <div class="docktitle"><span class="dockname" v-fit="122">Advanced Digitizing Panel</span><svg class="dockbtns" viewBox="-1 0 30 12"><path d="M4.500 1.500h5v5h-5zM1.500 4.500h5v5h-5z" fill="#e1e1e1" stroke="#000" /><path d="M4 2h6M1 5h6" stroke="#000" stroke-width="2" /><path d="M18 2l7 7M25 2l-7 7" stroke="#000" stroke-width="1.600" /></svg></div>
        <div class="note"><span v-fit="223">CAD tools are not enabled for the current map</span><span v-fit="18">tool</span></div>
      </section>
      <svg class="map" viewBox="287 145 1079 595">
        <clipPath id="land"><path :d="outline" /></clipPath>
        <path :d="outline" fill="#c7e6db" />
        <g clip-path="url(#land)">
          <path v-for="(d, i) in waterMask" :key="i" :d="d" fill="#2c7bb6" shape-rendering="crispEdges" />
          <path :d="gaps" fill="#c7e6db" shape-rendering="crispEdges" /><path :d="specks" fill="#2c7bb6" shape-rendering="crispEdges" />
          <path d="M815 347l10-8 5-2 8 4 1 8-1 5 2 9-4-5-4-2-3 3-2-5-7-2zM814 336l6-6v3l-4 4zM932 670l8-3 8 3 2 5-8 6-9-3zM897 614l5-5 4 1-2 9-5 2zM920 624l5 0 3 7-4 2z" fill="#fdc980" />
          <path d="M895 463l3-5 3 2 0 7 5 6 1 7-4 5-5-2-3-7 1-6zM902 517l3 7 1 8-2 2-2-11z" fill="#d7191c" /><path d="M899 471h3v3h-3zM905 529h2v6h-2z" fill="#ffe59c" />
        </g>
        <g fill="none" stroke-linejoin="round" stroke-linecap="round"><template v-for="g in roads" :key="g.c"><path v-for="(d, i) in g.d" :key="i" :d="line(d)" :stroke="g.c" :stroke-width="g.c === '#fff' ? 1.7 : 1.4" /></template></g>
        <path :d="outline" class="edge" /><path v-for="(d, i) in borders" :key="i" :d="d" class="edge" />
        <g class="county"><text v-for="c in counties" :key="c.t" :x="c.x" :y="c.y" :textLength="c.w" lengthAdjust="spacingAndGlyphs">{{ c.t }}</text></g>
        <circle v-for="(c, i) in cities" :key="i" :cx="c[0]" :cy="c[1]" r="4.200" fill="#cb1230" stroke="#36151c" stroke-width=".9" />
        <g class="place"><text v-for="p in places" :key="p.t" :x="p.x" :y="p.y" :textLength="p.w" lengthAdjust="spacingAndGlyphs">{{ p.t }}</text></g>
        <ellipse cx="1126.500" cy="426" rx="75" ry="47" fill="none" stroke="#ed1c24" stroke-width="4.500" />
        <text class="mark" x="1117" y="431">1</text>
      </svg>
    </main>

    <footer class="status">
      <span class="label" v-fit="53">Coordinate</span>
      <span class="field coord"><span v-fit="82">3595283,228321</span></span>
      <svg class="mouse" viewBox="0 0 16 16"><path d="M3 3l8-2M2 5l9-3M4 11l9-7" stroke="#333" /><ellipse cx="6" cy="6" rx="3.500" ry="5.500" transform="rotate(-35 6 6)" fill="#999" stroke="#222" /><path d="M3 6l5-4M4 8l5-4M6 10l4-3M11 2l3-2" stroke="#222" /><circle cx="11" cy="11.500" r="3.300" fill="#eee" stroke="#333" /><path d="M11 8.500l3 3-5 2" stroke="#555" fill="none" /></svg>
      <span class="label s-scale" v-fit="25">Scale</span>
      <span class="field scale"><span v-fit="59">1:4,384,354</span><svg viewBox="0 0 8 5"><path d="M.5.500L4 4 7.500.5" fill="none" stroke="#444" /></svg></span>
      <svg class="lock" viewBox="0 0 12 16"><path d="M3 8V4q0-3 3-3t3 3v4" fill="none" stroke="#999" stroke-width="1.500" /><rect y="7" width="12" height="8.500" rx="1" fill="#5e5e5e" /></svg>
      <span class="label s-mag" v-fit="44">Magnifier</span>
      <span class="field spin"><span v-fit="28">150%</span><svg class="clear" viewBox="0 0 13 10"><path d="M4 0h9v10H4L0 5z" fill="#999" /><path d="M5.500 2.500l5 5m0-5l-5 5" stroke="#fff" stroke-width="1.200" /></svg><i class="step"></i></span>
      <span class="label s-rot" v-fit="41">Rotation</span>
      <span class="field spin"><span v-fit="16">0.0</span><i class="step"></i></span>
      <svg class="tick" viewBox="0 0 13 13"><path d="M.5.500h12v12H.5z" fill="#fff" stroke="#333" /><path d="M3 6.500l2.500 2.500L10.500 3.500" fill="none" stroke="#222" stroke-width="1.200" /></svg>
      <span class="label s-render" v-fit="35">Render</span>
      <svg class="crs" viewBox="0 0 16 16" fill="none" stroke="#333"><circle cx="8" cy="8" r="6" fill="#ddd" stroke-width="2" /><path d="M8 0v16M0 8h16M4 3q3 5 0 10M12 3q-3 5 0 10M3 5q5 2 10 0M3 11q5-2 10 0" /></svg>
      <span class="label s-epsg" v-fit="84">EPSG:3857 (OTF)</span>
      <svg class="bubble" viewBox="0 0 16 14"><path d="M5 0h6q5 1 5 5.500 0 3-2 4.500l1 4-5-3H5Q0 10 0 5.500 0 1 5 0z" fill="#666" /><path d="M3 5.500h2m2 0h2m2 0h2" stroke="#fff" stroke-width="2" /></svg>
    </footer>
    <div class="strip"><i></i></div>

    <div class="popup">
      <template v-for="(it, i) in items" :key="i">
        <div v-if="!it.text" class="rule"></div>
        <div v-else class="item" :class="{ active: it.active }">
          <span class="ico"><svg v-if="it.icon" viewBox="0 0 16 16" v-html="icons[it.icon]"></svg></span>
          <span class="caption"><span v-fit="it.w"><template v-if="it.key !== undefined">{{ it.text.slice(0, it.key) }}<u>{{ it.text[it.key] }}</u>{{ it.text.slice(it.key + 1) }}</template><template v-else>{{ it.text }}</template></span></span>
          <span class="short"><span v-if="it.short" v-fit="it.sw">{{ it.short }}</span></span>
          <i v-if="it.sub" class="sub"></i>
        </div>
      </template>
    </div>
  </div>
</template>

<style>
body { margin: 0; overflow: hidden; }
</style>

<style scoped>
.window { position: relative; width: 1366px; height: 768px; overflow: hidden; background: #f0f0f0; color: #000; font: 11px/14px "DejaVu Sans Condensed", "DejaVu Sans", sans-serif; font-stretch: condensed; display: flex; flex-direction: column; white-space: nowrap; }
.window * { box-sizing: border-box; }
span > span, .label, .note > span { display: inline-block; white-space: pre; }
u { text-decoration: underline; text-underline-offset: 1px; text-decoration-thickness: 1px; }
svg { display: block; flex: none; }
.title { height: 23px; background: #fff; display: flex; align-items: center; font: 12px/16px "Noto Sans", sans-serif; padding-left: 2px; }
.logo { width: 16px; height: 17px; margin-right: 5px; }
.controls { width: 110px; height: 20px; margin: -2px 16px 0 auto; }
.menubar { height: 18px; background: #fff; display: flex; }
.menu { padding: 3px 8px 0; height: 18px; }
.menu.open { background: #cce8ff; border: 1px solid #99d1ff; width: 50px; margin-left: -1px; padding: 2px 7px 0; }
.toolbar { height: 34px; display: flex; align-items: center; border-bottom: 1px solid #b4b4b4; border-top: 1px solid #fafafa; }
.bar0 { height: 35px; }
.bar0, .bar1 { padding-left: 238px; }
.bar2 { padding-left: 257px; }
.tool { width: 31px; display: flex; justify-content: center; }
.tool svg { width: 24px; height: 24px; }
.drop { width: 12px; height: 4px; display: flex; justify-content: center; }
.drop::before { content: ""; border: 4px solid transparent; border-top-color: #777; border-bottom: 0; margin-left: -1px; }
.drop.on::before { border-top-color: #222; }
.split { width: 12px; align-self: stretch; border-left: 1px solid #fff; box-shadow: -1px 0 #b0b0b0; margin-left: 2px; margin-right: -2px; display: flex; align-items: center; padding-left: 4px; }
.dots { width: 3px; height: 26px; background: radial-gradient(circle at 1px 1px, #aaa 1px, transparent 1.3px) 0 0 / 3px 4px; }
.work { height: 597px; display: flex; }
.side { width: 47px; border-right: 1px solid #a5a5a5; border-bottom: 1px solid #a5a5a5; padding-top: 250px; display: flex; flex-direction: column; }
.sidetool { height: 30px; display: flex; align-items: center; padding-left: 11px; flex: none; }
.sidetool.lead { padding-left: 5px; }
.sidetool svg { width: 24px; height: 24px; }
.sidetool .drop { margin-left: 4px; }
.hsplit { height: 12px; border-top: 1px solid #aaa; padding: 5px 4px 0; flex: none; }
.hdots { display: block; height: 3px; background: radial-gradient(circle at 1px 1px, #aaa 1px, transparent 1.3px) 0 0 / 4px 3px; }
.docks { width: 235px; margin-right: 4px; padding-top: 1px; }
.docktitle { height: 19px; background: #dcdcdc; border: 1px solid #c0c0c0; display: flex; align-items: center; justify-content: space-between; padding: 0 0 0 1px; }
.dockname { padding-top: 2px; }
.dockbtns { width: 30px; height: 12px; }
.docktools { height: 28px; border-right: 1px solid #c8c8c8; border-top: 1px solid #fff; }
.tree { height: 444px; background: #fff; border: 1px solid #828790; border-bottom-width: 2px; padding-top: 154px; }
.picked { height: 18px; background: #d9d9d9; margin-bottom: 19px; }
.leaf { height: 18px; display: flex; align-items: center; padding-left: 43px; }
.leaf span, .leaf b { display: inline-block; padding-top: 2px; }
.sw { width: 16px; height: 16px; margin-right: 5px; }
.orange { background: #fdc980; }
.mint { background: #c7e6db; }
.blue { background: #2c7bb6; }
.osm { padding-left: 23px; }
.osm svg { width: 16px; height: 16px; margin: 0 6px; }
.check { width: 13px; height: 13px; border: 1px solid #333; background: #fff; }
.tabs { display: flex; align-items: flex-start; height: 26px; padding-left: 1px; }
.tab { width: 90px; height: 19px; border: 1px solid #d9d9d9; border-top: 0; padding: 4px 0 0 9px; }
.tab.current { width: 86px; height: 21px; background: #fff; margin-left: -1px; padding: 5px 0 0 12px; }
.note { padding-top: 3px; line-height: 13px; display: flex; flex-direction: column; align-items: center; }
.map { width: 1080px; height: 597px; background: #fff; border: 1px solid #828790; border-right: 0; }
.edge { fill: none; stroke: #000; stroke-width: 1.5; stroke-linejoin: round; }
.county { font: 14px "Liberation Serif", serif; fill: #4b5553; fill-opacity: .8; stroke: #687570; stroke-width: .3; }
.place { font: 17px "Noto Sans", sans-serif; fill: #404040; }
.mark { font: 28px Lato, sans-serif; fill: #000; }
.status { height: 25px; display: flex; align-items: center; padding-left: 506px; padding-top: 2px; }
.label { padding-top: 1px; }
.field { height: 20px; background: #fff; border: 1px solid #7a7a7a; display: flex; align-items: center; flex: none; }
.field > span { padding-top: 2px; }
.coord { width: 150px; justify-content: center; margin-left: 4px; }
.mouse { width: 16px; height: 16px; margin: -2px 0 0 3px; }
.s-scale { margin-left: 12px; }
.scale { width: 86px; margin-left: 4px; padding-left: 4px; }
.scale svg { width: 9px; height: 6px; margin-left: 9px; }
.lock { width: 12px; height: 16px; margin-left: 5px; }
.s-mag { margin-left: 14px; }
.spin { width: 71px; margin-left: 4px; padding: 0 1px 0 4px; }
.clear { width: 13px; height: 10px; margin-left: 4px; }
.step { margin-left: auto; width: 14px; height: 17px; border: 1px solid #ccc; background: linear-gradient(#ccc, #ccc) 0 7px / 100% 1px no-repeat #eee; display: flex; flex-direction: column; align-items: center; gap: 5px; padding-top: 2px; }
.step::before { content: ""; border: 3px solid transparent; border-top: 0; border-bottom-color: #111; }
.step::after { content: ""; border: 3px solid transparent; border-bottom: 0; border-top-color: #111; }
.s-rot { margin-left: 8px; }
.s-rot + .spin { margin-left: 10px; }
.tick { width: 13px; height: 13px; margin-left: 6px; }
.s-render { margin-left: 4px; }
.crs { width: 16px; height: 16px; margin-left: 18px; }
.s-epsg { margin-left: 3px; }
.bubble { width: 16px; height: 14px; margin-left: 20px; }
.strip { height: 2px; background: #2b2b2b; display: flex; }
.strip i { margin-left: 48px; width: 344px; background: #c4c4c4; border-bottom: 1px solid #eee; }
.popup { position: absolute; left: 0; top: 41px; width: 253px; height: 350px; padding: 2px; background: #f0f0f0; border: 1px solid #c4c4c4; box-shadow: 2px 2px 3px rgba(0, 0, 0, .55); }
.item { height: 22px; display: flex; align-items: center; padding-left: 3px; margin-right: 1px; }
.item.active { background: #91c9f7; }
.ico { width: 29px; }
.ico svg { width: 16px; height: 16px; }
.caption { width: 137px; padding-top: 2px; }
.short { width: 61px; padding-top: 2px; }
.sub { border: 4px solid transparent; border-left: 5px solid #000; border-right: 0; }
.rule { height: 9px; margin: 0 1px 0 28px; background: linear-gradient(#d2d2d2, #d2d2d2) 0 4px / 100% 1px no-repeat; }
</style>
